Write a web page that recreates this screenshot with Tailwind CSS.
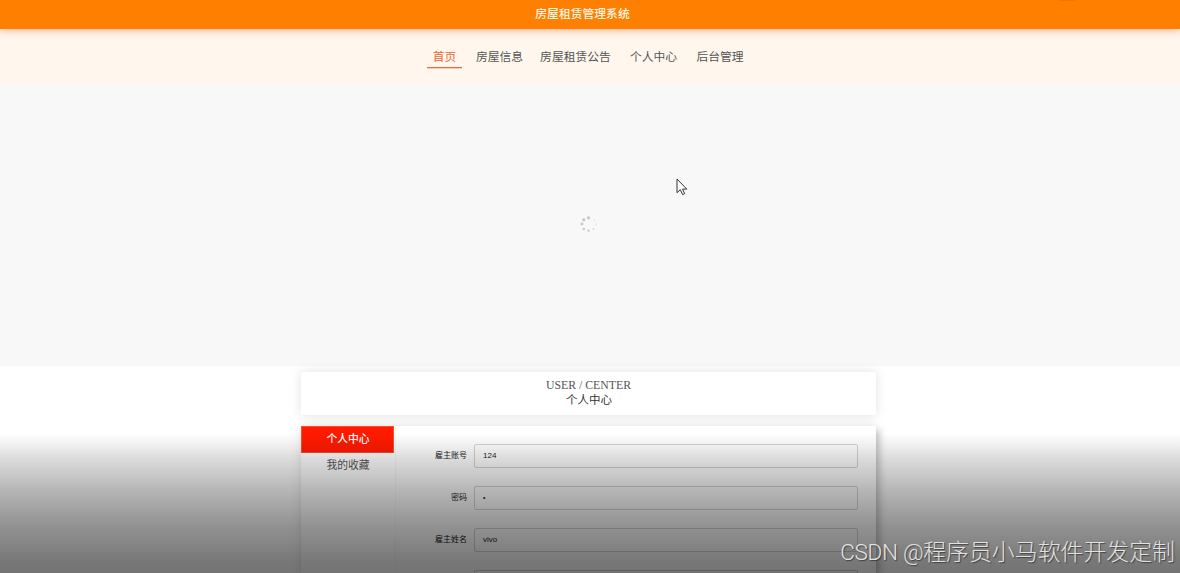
<!DOCTYPE html>
<html lang="zh-CN">
  <head>
    <meta charset="UTF-8" />
    <meta name="viewport" content="width=device-width, initial-scale=1.0" />
    <title>房屋租赁管理系统</title>
    <script src="https://cdn.jsdelivr.net/npm/@tailwindcss/browser@4"></script>
  </head>
  <body class="relative h-[573px] overflow-hidden bg-white font-['Liberation_Sans','Noto_Sans_CJK_SC',sans-serif] text-[#333]">
    <!-- Header -->
    <header class="relative z-10 h-[29px] bg-[#ff8000] text-center text-[11.8px] leading-[29px] font-medium text-[#fff4e4] shadow-[0_1px_8px_rgba(235,95,30,0.5)]">
      <div class="pr-[15px]">房屋租赁管理系统</div>
      <div class="absolute top-0 left-[1059px] h-[1px] w-[16px] rounded-b-full bg-[#f57200]"></div>
    </header>

    <!-- Navigation -->
    <nav class="flex h-[55px] bg-[#fff7ed] pt-[18px] pl-[427px] text-[11.8px] leading-[20px] text-[#555]">
      <a class="h-[21px] w-[35px] border-b border-[#ea6a35] text-center text-[#ea6a35] shadow-[0_1px_0_rgba(234,106,53,0.3)]">首页</a>
      <a class="ml-[8px] w-[59px] text-center">房屋信息</a>
      <a class="ml-[5px] w-[83px] text-center">房屋租赁公告</a>
      <a class="ml-[7px] w-[59px] text-center">个人中心</a>
      <a class="ml-[8px] w-[58px] text-center">后台管理</a>
    </nav>

    <!-- Carousel, still loading -->
    <section class="flex h-[282px] items-center justify-center bg-[#f8f8f8] pr-[3px] pb-[2px]">
      <svg class="h-[18px] w-[18px]" viewBox="0 0 18 18" fill="#c4c4c4">
        <circle cx="8.5" cy="2.8" r="1.6" />
        <circle cx="3.8" cy="4.7" r="1.5" />
        <circle cx="2" cy="9" r="1.4" />
        <circle cx="3.8" cy="13.9" r="1.2" />
        <circle cx="8.5" cy="15.7" r="1.1" />
        <circle cx="13.5" cy="14" r="0.8" />
        <circle cx="16" cy="9" r="0.6" />
        <circle cx="14.2" cy="4.9" r="0.5" />
      </svg>
    </section>

    <main class="ml-[301px] w-[575px] pt-[6px]">
      <div class="h-[43px] rounded-[2px] bg-white pt-[5px] text-center shadow-[0_0_12px_rgba(0,0,0,0.12)]">
        <h2 class="font-['Liberation_Serif',serif] text-[11.8px] leading-[16px] text-[#555]">USER / CENTER</h2>
        <p class="pl-[1px] text-[11.5px] leading-[15.5px] text-[#333]">个人中心</p>
      </div>

      <div class="mt-[11px] flex h-[147px] bg-white shadow-[0_0_12px_rgba(0,0,0,0.1),4px_4px_6px_rgba(70,60,40,0.22)]">
        <aside class="w-[94px] text-center text-[10.8px]">
          <div class="h-[27px] w-[93px] border border-[#ff4a30] bg-[#ff1a00] pl-[1px] leading-[24px] font-medium text-white">个人中心</div>
          <div class="leading-[24px] text-[#555]">我的收藏</div>
        </aside>
        <form class="flex flex-1 flex-col gap-[18px] overflow-hidden border-l border-black/3 pt-[18px] pr-[18px] text-[8px] text-[#222]">
          <div class="flex h-[24px] shrink-0 items-center">
            <label class="w-[71px] text-right">雇主账号</label>
            <div class="ml-[7px] h-[24px] flex-1 rounded-[2px] border border-[#d4d4d4] pl-[8px] leading-[22px]">124</div>
          </div>
          <div class="flex h-[24px] shrink-0 items-center">
            <label class="w-[71px] text-right">密码</label>
            <div class="ml-[7px] h-[24px] flex-1 rounded-[2px] border border-[#d4d4d4] pl-[8px] text-[7px] leading-[22px]">•</div>
          </div>
          <div class="flex h-[24px] shrink-0 items-center">
            <label class="w-[71px] text-right">雇主姓名</label>
            <div class="ml-[7px] h-[24px] flex-1 rounded-[2px] border border-[#d4d4d4] pl-[8px] leading-[22px]">vivo</div>
          </div>
          <div class="ml-[78px] h-[3px] shrink-0 rounded-t-[2px] border border-b-0 border-[#d4d4d4]"></div>
        </form>
      </div>
    </main>

    <!-- Bottom shade -->
    <div class="absolute bottom-0 left-0 z-20 h-[140px] w-full bg-[linear-gradient(to_bottom,rgba(0,0,0,0)_0%,rgba(0,0,0,0.07)_10%,rgba(0,0,0,0.145)_19%,rgba(0,0,0,0.225)_31%,rgba(0,0,0,0.3)_43%,rgba(0,0,0,0.37)_55%,rgba(0,0,0,0.43)_67%,rgba(0,0,0,0.48)_79%,rgba(0,0,0,0.53)_91%,rgba(0,0,0,0.55)_100%)]"></div>

    <!-- Mouse pointer -->
    <svg class="absolute top-[178px] left-[676px] z-30 h-[18px] w-[12px]" viewBox="0 0 12 18" fill="#fff" stroke="#333" stroke-width="1">
      <path d="M1 1V14.7L4.3 11.7L6.6 16.6L8.7 15.7L6.5 11.1H10.8Z" />
    </svg>

    <!-- Watermark -->
    <div class="absolute top-[536px] right-[5px] z-30 text-[22.9px] leading-[32px] font-light whitespace-nowrap text-[#e2e2e2] [text-shadow:1px_1px_1px_rgba(40,40,40,0.7)]"><span class="font-['Roboto',sans-serif] text-[22.6px] tracking-[-0.35px]">CSDN @</span>程序员小马软件开发定制</div>
  </body>
</html>
